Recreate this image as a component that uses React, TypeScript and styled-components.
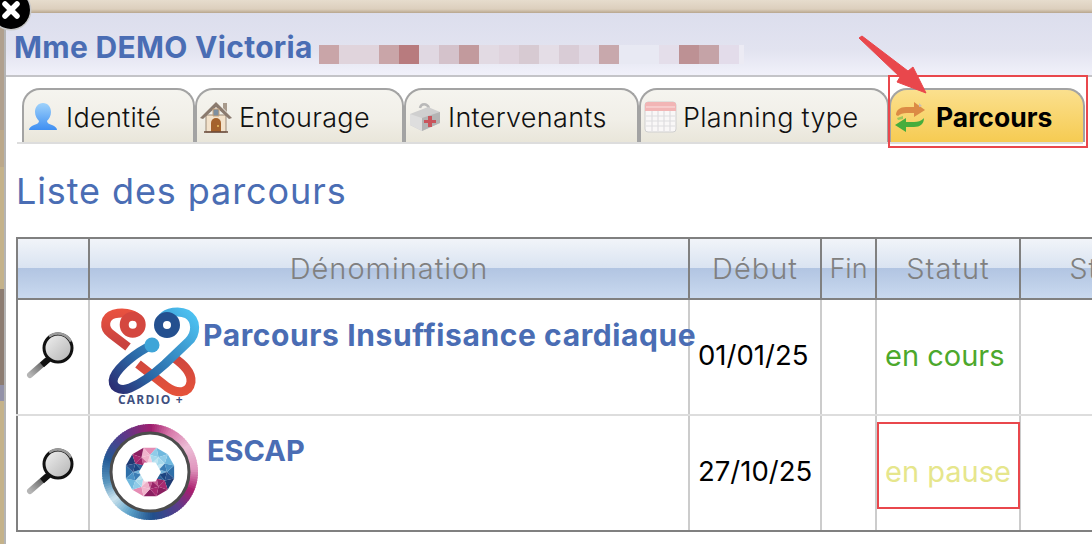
import React from "react";
import styled, { createGlobalStyle } from "styled-components";

const Global = createGlobalStyle`
  html, body { margin: 0; padding: 0; background: #fff; }
  body { font-family: Inter, "Liberation Sans", sans-serif; }
`;

const Page = styled.div`
  position: relative;
  width: 1092px;
  height: 544px;
  overflow: hidden;
  display: flex;
  flex-direction: column;
  background: #fff;
`;
const TopBand = styled.div`
  height: 13px;
  flex: none;
  background: linear-gradient(#e6dccd, #dccfbd 70%, #b8a68e);
`;
const Body = styled.div`
  flex: 1;
  display: flex;
  min-height: 0;
`;
const SideStrip = styled.div`
  width: 4px;
  flex: none;
  border-right: 2px solid #b4b4b4;
  background: linear-gradient(
    #b0a08e 0 22%, #bba88a 22% 29%, #c4b28a 29% 52%, #8d7d72 52% 70%, #9392a8 70% 73%, #c4b28a 73%
  );
`;
const Main = styled.div`
  flex: 1;
  min-width: 0;
  display: flex;
  flex-direction: column;
`;
const Header = styled.header`
  flex: none;
  display: flex;
  align-items: flex-end;
  padding: 0 0 13px 8px;
  height: 49px;
  border-bottom: 2px solid #c4c4c8;
  background: linear-gradient(#dcdeed, #e2e3f0 60%, #f1f1fa);
`;
const PatientName = styled.h1`
  margin: 0 0 -2px;
  width: 299px;
  font-size: 30px;
  line-height: 34px;
  font-weight: 700;
  color: #4a6db4;
  white-space: nowrap;
  letter-spacing: 0.3px;
`;
const Blur = styled.div`
  display: flex;
  margin: 0 0 -2px 6px;
  height: 19px;
`;
const BlurCell = styled.span<{ $c: string; $w?: number }>`
  display: block;
  width: ${(p) => p.$w ?? 20}px;
  background: ${(p) => p.$c};
`;
const TabBar = styled.nav`
  display: flex;
  flex: none;
  margin: 11px 0 0 11px;
  height: 56px;
  box-sizing: border-box;
  padding-left: 5px;
  border-bottom: 2px solid #dddddd;
  width: 1066px;
`;
const Tab = styled.div<{ $w: number; $active?: boolean }>`
  width: ${(p) => p.$w}px;
  flex: none;
  box-sizing: border-box;
  display: flex;
  align-items: center;
  gap: ${(p) => (p.$active ? 9 : 6)}px;
  padding: 2px 0 0 2px;
  border: 2px solid #a3a3a3;
  border-bottom: none;
  border-radius: 18px 18px 0 0;
  font-size: ${(p) => (p.$active ? 26.5 : 27)}px;
  letter-spacing: ${(p) => (p.$active ? 0 : 0.3)}px;
  font-weight: ${(p) => (p.$active ? 700 : 300)};
  color: ${(p) => (p.$active ? "#000" : "#111")};
  background: ${(p) =>
    p.$active
      ? "linear-gradient(#fbe08e, #f6cb52)"
      : "linear-gradient(#f5f4ef, #f1efe8 55%, #e9e6da)"};
  white-space: nowrap;
`;
const PageTitle = styled.h2`
  margin: 27px 0 0 10px;
  font-size: 36px;
  line-height: 40px;
  font-weight: 400;
  letter-spacing: 0.9px;
  color: #4a6db4;
  flex: none;
`;
const Table = styled.table`
  margin: 26px 0 0 10px;
  border-collapse: collapse;
  table-layout: fixed;
  width: 1185px;
  flex: none;
`;
const HeadCell = styled.th<{ $narrow?: boolean }>`
  height: 59px;
  padding: 0;
  border: 2px solid #808080;
  font-size: ${(p) => (p.$narrow ? 27 : 29)}px;
  letter-spacing: ${(p) => (p.$narrow ? 0 : 1)}px;
  font-weight: 300;
  color: #808080;
  background: linear-gradient(#f1f4f9, #d9e3f1 50%, #b2c5e2 50%, #c9d9ef);
  white-space: nowrap;
`;
const Row = styled.tr`
  height: 116px;
`;
const Cell = styled.td<{ $pad?: boolean }>`
  padding: 0 0 ${(p) => (p.$pad ? 4 : 0)}px ${(p) => (p.$pad ? 8 : 0)}px;
  border: 2px solid #cccccc;
  border-top-color: #dddddd;
  border-bottom-color: #dddddd;
  vertical-align: middle;
  tr:last-child > & {
    border-bottom-color: #808080;
  }
  &:first-child {
    border-left-color: #808080;
  }
`;
const NameWrap = styled.div`
  display: flex;
  align-items: flex-start;
  height: 114px;
`;
const LogoSlot = styled.div<{ $w: number; $left: number; $top: number }>`
  flex: none;
  width: ${(p) => p.$w}px;
  padding: ${(p) => p.$top}px 0 0 ${(p) => p.$left}px;
  box-sizing: border-box;
  svg {
    display: block;
  }
`;
const ParcoursName = styled.span<{ $size: number; $ls: number }>`
  font-size: ${(p) => p.$size}px;
  letter-spacing: ${(p) => p.$ls}px;
  line-height: 34px;
  font-weight: 700;
  color: #4a6db4;
  white-space: nowrap;
  margin-top: 18px;
`;
const DateText = styled.span`
  color: #000;
  font-size: 27.5px;
  font-weight: 400;
`;
const StatusText = styled.span<{ $c: string }>`
  color: ${(p) => p.$c};
  font-size: 29px;
  font-weight: 400;
`;
const LensSvg = styled.svg`
  display: block;
  margin: 0 auto;
`;
const CloseBadge = styled.svg`
  position: absolute;
  left: -10px;
  top: -11px;
`;
const Marker = styled.div<{ $x: number; $y: number; $w: number; $h: number }>`
  position: absolute;
  left: ${(p) => p.$x}px;
  top: ${(p) => p.$y}px;
  width: ${(p) => p.$w}px;
  height: ${(p) => p.$h}px;
  box-sizing: border-box;
  border: 2px solid #e9474c;
  pointer-events: none;
`;
const Arrow = styled.svg`
  position: absolute;
  left: 850px;
  top: 30px;
`;
const CardioText = styled.text`
  font-family: "Open Sans", sans-serif;
  font-weight: 700;
  font-size: 12px;
  letter-spacing: 1.2px;
  fill: #3f5080;
`;

const blurCells: [string, number?][] = [
  ["#c9a5a8"], ["#e0d4dc"], ["#e0d4dc"], ["#c9a5a8"], ["#b87b7e"], ["#e0d8e2"], ["#d4c2cb"], ["#c29a9d"],
  ["#e2dae3"], ["#dfd3dd"], ["#d7cad2"], ["#e4dde6"], ["#d9ccd6"], ["#e1d9e4"], ["#c8a8ac"], ["#e8e9f3"],
  ["#e8e9f3"], ["#e4deea"], ["#bd9194"], ["#c5a3a7"], ["#e3dcea"], ["#ecebf4", 5],
];

const PersonIcon = () => (
  <svg width="34" height="34" viewBox="0 0 34 34">
    <defs>
      <linearGradient id="pg" x1="0" y1="0" x2="0" y2="1">
        <stop offset="0" stopColor="#9fd2fb" />
        <stop offset="1" stopColor="#3f8ff2" />
      </linearGradient>
    </defs>
    <path
      d="M17 3c5 0 8 4 8 9 0 4-2 7-4 9 0 2 2 3 5 4 3 1 5 3 5 5H3c0-2 2-4 5-5 3-1 5-2 5-4-2-2-4-5-4-9 0-5 3-9 8-9z"
      fill="url(#pg)"
    />
  </svg>
);
const HouseIcon = () => (
  <svg width="34" height="34" viewBox="0 0 34 34">
    <path d="M7 15h20v17H7z" fill="#f3e2cb" stroke="#9b8a78" />
    <path d="M1 18 17 2l16 16-3 1L17 7 4 19z" fill="#8a7a6e" />
    <path d="M24 3h4v9l-4-4z" fill="#a89a8c" />
    <path d="M14 9h6v7h-6z" fill="#7d8fa0" stroke="#c9a37a" />
    <path d="M12 32V23a5 5 0 0 1 10 0v9z" fill="#a4622c" />
    <circle cx="19" cy="26" r="1" fill="#e8c060" />
    <path d="M5 32h24" stroke="#6a4a3a" strokeWidth="1.5" />
  </svg>
);
const KitIcon = () => (
  <svg width="34" height="34" viewBox="0 0 34 34">
    <path d="M12 8c1-5 7-5 9 0" fill="none" stroke="#b9b9b9" strokeWidth="2.5" />
    <path d="M2 14 20 7l12 5v11l-18 8-12-6z" fill="#cfcfcf" />
    <path d="M14 18 32 12v11l-18 8z" fill="#b4b4b4" />
    <path d="M2 14l12 4v13L2 25z" fill="#dedede" />
    <path d="M20 16h4v4h4v3h-4v4h-4v-4h-4v-3h4z" fill="#c9555c" />
  </svg>
);
const CalendarIcon = () => (
  <svg width="34" height="34" viewBox="0 0 34 34">
    <rect x="2" y="2" width="31" height="30" rx="3" fill="#f9f7f7" stroke="#cfcfcf" />
    <path d="M2 5a3 3 0 0 1 3-3h25a3 3 0 0 1 3 3v6H2z" fill="#f2b5b5" />
    <path d="M3 7h29" stroke="#fbe2e2" />
    <path
      d="M9 11v20M15 11v20M21 11v20M27 11v20M3 16h29M3 21h29M3 26h29"
      stroke="#dedddf"
      strokeWidth="1.2"
    />
  </svg>
);
const CycleIcon = () => (
  <svg width="34" height="34" viewBox="0 0 34 34">
    <path d="M3 15c0-5 4-8 10-8h8V2l11 8-11 7v-4h-7c-4 0-7 1-9 3z" fill="#dc8b45" />
    <path d="M26 3l3 3-3 1z" fill="#c9bfb5" />
    <path d="M31 18c0 6-4 9-10 9h-8v5L2 25l11-7v4h8c4 0 7-1 9-3z" fill="#46ad3c" />
    <path d="M4 18l6-2v3l-5 1z" fill="#9fc85a" />
  </svg>
);

const LensIcon = ({ id }: { id: string }) => (
  <LensSvg width="54" height="54" viewBox="0 0 54 54">
    <defs>
      <linearGradient id={id} x1="0" y1="0" x2="1" y2="1">
        <stop offset="0" stopColor="#f2f2f2" />
        <stop offset="1" stopColor="#b2b2b2" />
      </linearGradient>
      <linearGradient id={`${id}h`} x1="1" y1="0" x2="0" y2="1">
        <stop offset="0" stopColor="#555" />
        <stop offset="1" stopColor="#b5b5b5" />
      </linearGradient>
    </defs>
    <path d="M20 31 4 45" stroke={`url(#${id}h)`} strokeWidth="6" strokeLinecap="round" />
    <path d="M24 28 16 35" stroke="#111" strokeWidth="6" />
    <circle cx="32" cy="18" r="14" fill={`url(#${id})`} stroke="#111" strokeWidth="3" />
    <path d="M23 6.500a15 15 0 0 1 22 5" fill="none" stroke="#9a9a9a" strokeWidth="2.500" />
  </LensSvg>
);

const CardioLogo = () => (
  <svg width="110" height="108" viewBox="0 0 110 108">
    <defs>
      <linearGradient id="cb1" gradientUnits="userSpaceOnUse" x1="20" y1="90" x2="100" y2="15">
        <stop offset="0" stopColor="#2b2c72" />
        <stop offset="0.35" stopColor="#2a6aa8" />
        <stop offset="1" stopColor="#4cc0f0" />
      </linearGradient>
      <linearGradient id="cr" gradientUnits="userSpaceOnUse" x1="0" y1="8" x2="0" y2="95">
        <stop offset="0" stopColor="#e9523f" />
        <stop offset="0.4" stopColor="#c8423f" />
        <stop offset="1" stopColor="#e6533a" />
      </linearGradient>
    </defs>
    <g fill="none" strokeWidth="9">
      <path d="M33 45 16 32C8 26 9 15 19 12 27 10 38 11 42 16" stroke="url(#cr)" />
      <circle cx="37.700" cy="22.700" r="8.500" stroke="#d4473f" />
      <path d="M43 62 72 85C82 92 94 92 96 80 97 70 88 62 78 55" stroke="url(#cr)" />
      <path d="M57 43C42 50 24 64 19 75 15 85 25 90 35 86 47 81 60 71 70 62L93 40C102 32 102 18 92 12 84 8 72 10 67 16" stroke="url(#cb1)" />
      <circle cx="72" cy="23" r="8.500" stroke="#24508f" />
    </g>
    <circle cx="57" cy="43" r="7.500" fill="#3fa5d8" />
    <CardioText x="23" y="102">CARDIO +</CardioText>
  </svg>
);

type RGB = [number, number, number];
const ringStops: [number, RGB][] = [
  [0, [160, 30, 110]], [25, [215, 120, 170]], [55, [236, 190, 214]], [85, [224, 150, 190]], [112, [170, 30, 110]],
  [140, [90, 60, 140]], [175, [32, 80, 140]], [205, [90, 160, 200]], [232, [205, 228, 238]], [255, [90, 150, 190]],
  [285, [35, 90, 150]], [320, [85, 60, 140]], [360, [160, 30, 110]],
];
const ringColor = (a: number) => {
  for (let i = 1; i < ringStops.length; i++) {
    const [a0, c0] = ringStops[i - 1];
    const [a1, c1] = ringStops[i];
    if (a <= a1) {
      const t = (a - a0) / (a1 - a0);
      return `rgb(${c0.map((v, k) => Math.round(v + (c1[k] - v) * t)).join(",")})`;
    }
  }
  return "#a01e6e";
};
const pt = (r: number, a: number) => {
  const d = ((a - 90) * Math.PI) / 180;
  return `${(48 + r * Math.cos(d)).toFixed(2)} ${(48 + r * Math.sin(d)).toFixed(2)}`;
};
// four shades per sector: outer, side, inner, inner side
const pink = ["#e58cb4", "#f0b4cc", "#f6d0e0", "#eeb0c8"];
const light = ["#6fb8de", "#8fcbe8", "#c0e4f2", "#a4d8ec"];
const blue = ["#2f6fa8", "#4a92c6", "#6fb0d8", "#3a7cb4"];
const navy = ["#1f3a72", "#28508c", "#2a6098", "#1c4480"];
const magenta = ["#8a1f60", "#a82a70", "#c85a90", "#9a2468"];
const sectors = [pink, light, light, blue, navy, magenta, magenta, pink, light, blue, navy, magenta];

const EscapLogo = () => (
  <svg width="96" height="96" viewBox="0 0 96 96">
    {Array.from({ length: 120 }, (_, i) => (
      <path key={i} d={`M${pt(43.75, i * 3)}L${pt(43.75, i * 3 + 5)}`} fill="none" stroke={ringColor(i * 3)} strokeWidth="8.500" />
    ))}
    <circle cx="48" cy="48" r="39" fill="#fff" stroke="#4c4c4c" strokeWidth="3" />
    {sectors.map((s, i) => {
      const a = i * 30 - 15;
      return (
        <g key={i}>
          <polygon points={`${pt(25, a)} ${pt(25, a + 30)} ${pt(17, a + 15)}`} fill={s[0]} />
          <polygon points={`${pt(17, a - 15)} ${pt(25, a)} ${pt(17, a + 15)}`} fill={s[1]} />
          <polygon points={`${pt(9.500, a)} ${pt(9.500, a + 30)} ${pt(17, a + 15)}`} fill={s[2]} />
          <polygon points={`${pt(17, a - 15)} ${pt(9.500, a)} ${pt(17, a + 15)}`} fill={s[3]} />
        </g>
      );
    })}
    <polygon points={[0, 60, 120, 180, 240, 300].map((a) => pt(11, a + 30)).join(" ")} fill="#fff" />
  </svg>
);

const columns = [72, 600, 132, 55, 144, 182];

export default function App() {
  return (
    <Page>
      <Global />
      <TopBand />
      <Body>
        <SideStrip />
        <Main>
          <Header>
            <PatientName>Mme DEMO Victoria</PatientName>
            <Blur>
              {blurCells.map(([c, w], i) => (
                <BlurCell key={i} $c={c} $w={w} />
              ))}
            </Blur>
          </Header>
          <TabBar>
            <Tab $w={173}><PersonIcon />Identité</Tab>
            <Tab $w={209}><HouseIcon />Entourage</Tab>
            <Tab $w={235}><KitIcon />Intervenants</Tab>
            <Tab $w={250}><CalendarIcon />Planning type</Tab>
            <Tab $w={196} $active><CycleIcon />Parcours</Tab>
          </TabBar>
          <PageTitle>Liste des parcours</PageTitle>
          <Table>
            <colgroup>
              {columns.map((w, i) => (
                <col key={i} width={w} />
              ))}
            </colgroup>
            <thead>
              <tr>
                <HeadCell />
                <HeadCell>Dénomination</HeadCell>
                <HeadCell>Début</HeadCell>
                <HeadCell $narrow>Fin</HeadCell>
                <HeadCell>Statut</HeadCell>
                <HeadCell>Statut</HeadCell>
              </tr>
            </thead>
            <tbody>
              <Row>
                <Cell><LensIcon id="l1" /></Cell>
                <Cell>
                  <NameWrap>
                    <LogoSlot $w={113} $left={5} $top={2}><CardioLogo /></LogoSlot>
                    <ParcoursName $size={30} $ls={0.6}>Parcours Insuffisance cardiaque</ParcoursName>
                  </NameWrap>
                </Cell>
                <Cell $pad><DateText>01/01/25</DateText></Cell>
                <Cell />
                <Cell $pad><StatusText $c="#4ca82c">en cours</StatusText></Cell>
                <Cell />
              </Row>
              <Row>
                <Cell><LensIcon id="l2" /></Cell>
                <Cell>
                  <NameWrap>
                    <LogoSlot $w={117} $left={12} $top={8}><EscapLogo /></LogoSlot>
                    <ParcoursName $size={29} $ls={0}>ESCAP</ParcoursName>
                  </NameWrap>
                </Cell>
                <Cell $pad><DateText>27/10/25</DateText></Cell>
                <Cell />
                <Cell $pad><StatusText $c="#e6e68c">en pause</StatusText></Cell>
                <Cell />
              </Row>
            </tbody>
          </Table>
        </Main>
      </Body>
      <CloseBadge width="42" height="42" viewBox="0 0 42 42">
        <circle cx="21" cy="21" r="20.500" fill="#c8c8c8" />
        <circle cx="21" cy="21" r="19" fill="#000" />
        <path d="M15 15 27 27M27 15 15 27" stroke="#fff" strokeWidth="5.500" strokeLinecap="round" />
      </CloseBadge>
      <Arrow width="80" height="70" viewBox="0 0 80 70">
        <path d="M9 8 12 6 58 41 63 37 76 63 47 52 50 47z" fill="#e9474c" stroke="#e9474c" strokeLinejoin="round" />
      </Arrow>
      <Marker $x={888} $y={75} $w={200} $h={73} />
      <Marker $x={877} $y={422} $w={143} $h={87} />
    </Page>
  );
}
